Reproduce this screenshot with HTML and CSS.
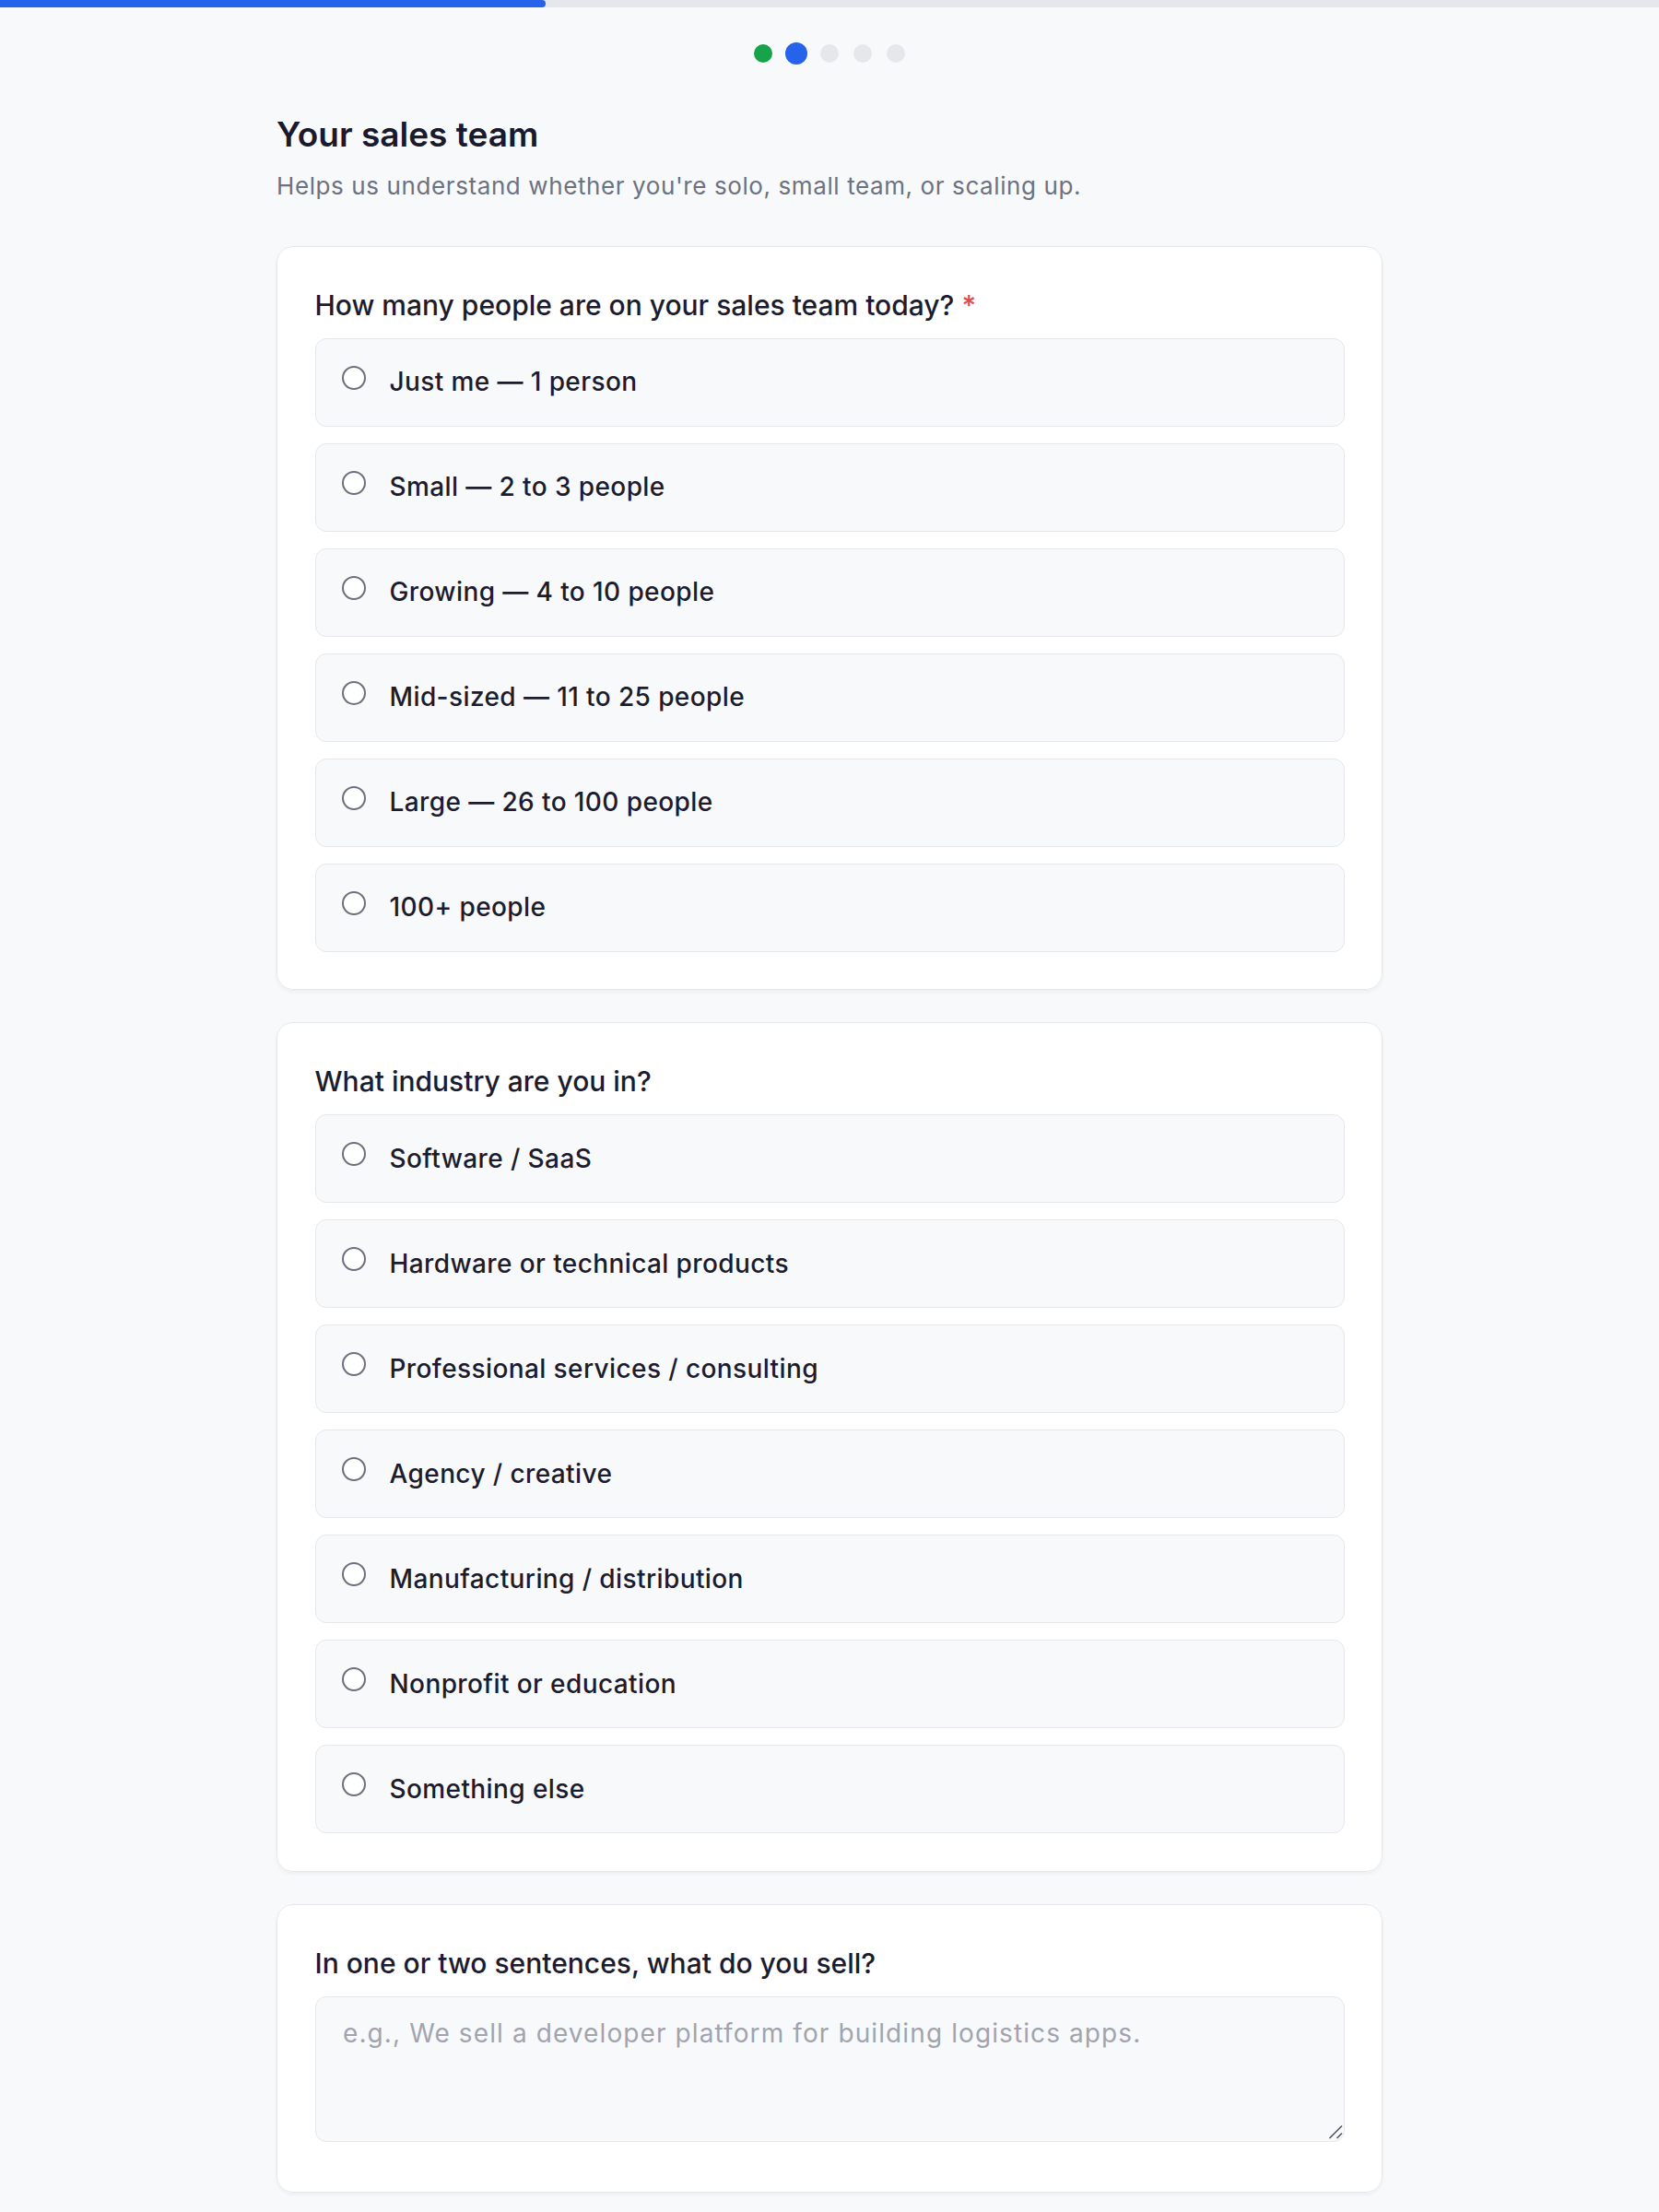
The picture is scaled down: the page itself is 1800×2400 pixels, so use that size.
FILE: index.html
```html
<!DOCTYPE html>
<html lang="en">
<head>
<meta charset="utf-8">
<title>Your sales team</title>
<link rel="stylesheet" href="styles.css">
</head>
<body>
  <div class="progress"><div class="progress-fill" style="width: 32.9%"></div></div>

  <div class="steps">
    <span class="step done"></span>
    <span class="step active"></span>
    <span class="step"></span>
    <span class="step"></span>
    <span class="step"></span>
  </div>

  <main class="wrap">
    <header class="intro">
      <h1 class="title">Your sales team</h1>
      <p class="subtitle">Helps us understand whether you're solo, small team, or scaling up.</p>
    </header>

    <form class="questions">
      <fieldset class="card">
        <legend class="question">How many people are on your sales team today?<span class="req">*</span></legend>
        <div class="options">
          <label class="option"><input type="radio" class="radio" name="team"><span>Just me — 1 person</span></label>
          <label class="option"><input type="radio" class="radio" name="team"><span>Small — 2 to 3 people</span></label>
          <label class="option"><input type="radio" class="radio" name="team"><span>Growing — 4 to 10 people</span></label>
          <label class="option"><input type="radio" class="radio" name="team"><span>Mid-sized — 11 to 25 people</span></label>
          <label class="option"><input type="radio" class="radio" name="team"><span>Large — 26 to 100 people</span></label>
          <label class="option"><input type="radio" class="radio" name="team"><span>100+ people</span></label>
        </div>
      </fieldset>

      <fieldset class="card">
        <legend class="question">What industry are you in?</legend>
        <div class="options">
          <label class="option"><input type="radio" class="radio" name="industry"><span>Software / SaaS</span></label>
          <label class="option"><input type="radio" class="radio" name="industry"><span>Hardware or technical products</span></label>
          <label class="option"><input type="radio" class="radio" name="industry"><span>Professional services / consulting</span></label>
          <label class="option"><input type="radio" class="radio" name="industry"><span>Agency / creative</span></label>
          <label class="option"><input type="radio" class="radio" name="industry"><span>Manufacturing / distribution</span></label>
          <label class="option"><input type="radio" class="radio" name="industry"><span>Nonprofit or education</span></label>
          <label class="option"><input type="radio" class="radio" name="industry"><span>Something else</span></label>
        </div>
      </fieldset>

      <fieldset class="card">
        <legend class="question">In one or two sentences, what do you sell?</legend>
        <div class="answer-box">
          <textarea class="answer" placeholder="e.g., We sell a developer platform for building logistics apps."></textarea>
          <svg class="grip" width="16" height="16" viewBox="0 0 16 16" aria-hidden="true">
            <path d="M1.5 15 L15 1.5 M9.5 15 L15 9.5" stroke="#55555f" stroke-width="1.6" fill="none"/>
          </svg>
        </div>
      </fieldset>
    </form>
  </main>
</body>
</html>
```

FILE: styles.css
```css
* {
  box-sizing: border-box;
}

html, body {
  margin: 0;
  padding: 0;
}

body {
  background: #f8f9fb;
  font-family: Inter, "Noto Sans", "Liberation Sans", sans-serif;
  color: #1c1c2e;
  min-height: 2400px;
}

/* top progress bar */
.progress {
  height: 8px;
  background: #e5e7eb;
}

.progress-fill {
  height: 100%;
  background: #2563eb;
  border-radius: 0 4px 4px 0;
}

/* step dots */
.steps {
  display: flex;
  justify-content: center;
  gap: 16px;
  margin-top: 40px;
  height: 20px;
}

.step {
  width: 20px;
  height: 20px;
  border-radius: 50%;
  background: #e5e7eb;
}

.step.done {
  background: #16a34a;
}

.step.active {
  background: #2563eb;
  transform: scale(1.2);
}

/* page column */
.wrap {
  width: 1200px;
  margin: 0 auto;
  padding-top: 54.6px;
  padding-bottom: 60px;
}

.intro {
  margin-bottom: 47px;
}

.title {
  margin: 0 0 16px;
  font-size: 37px;
  line-height: 45px;
  font-weight: 600;
  color: #1a1a2e;
}

.subtitle {
  margin: 0;
  font-size: 26px;
  line-height: 36px;
  letter-spacing: 0.6px;
  color: #6b7280;
}

/* question cards */
.questions {
  display: flex;
  flex-direction: column;
  gap: 35px;
}

.card {
  margin: 0;
  min-width: 0;
  background: #ffffff;
  border: 1px solid #e5e7eb;
  border-radius: 18px;
  padding: 41px 40.5px 40.5px;
  box-shadow: 0 2px 4px rgba(17, 24, 39, 0.05);
}

.question {
  float: left;
  width: 100%;
  padding: 0;
  margin: 0 0 13px;
  font-size: 30px;
  line-height: 45px;
  font-weight: 500;
  color: #1c1c2e;
}

.question + * {
  clear: both;
}

.req {
  color: #e5484d;
  margin-left: 8px;
}

.options {
  display: flex;
  flex-direction: column;
  gap: 18px;
}

.option {
  display: flex;
  align-items: flex-start;
  gap: 26px;
  padding: 26.75px 28.5px;
  background: #f8f9fb;
  border: 1px solid #e5e7eb;
  border-radius: 12px;
  font-size: 28px;
  line-height: 40.5px;
  letter-spacing: 0.4px;
  font-weight: 500;
  color: #1c1c2e;
  cursor: pointer;
}

.radio {
  appearance: none;
  -webkit-appearance: none;
  flex: none;
  width: 26px;
  height: 26px;
  margin: 2.5px 0 0 -0.5px;
  border: 2px solid #6e6e7e;
  border-radius: 50%;
  background: #ffffff;
}

/* free-text answer */
.answer-box {
  position: relative;
  margin-bottom: 14px;
}

.answer {
  display: block;
  width: 100%;
  height: 158px;
  margin: 0;
  padding: 19px 29.5px;
  background: #f8f9fb;
  border: 1px solid #e5e7eb;
  border-radius: 12px;
  font-family: Inter, "Noto Sans", "Liberation Sans", sans-serif;
  font-size: 28px;
  line-height: 40.5px;
  letter-spacing: 1.1px;
  color: #1c1c2e;
  resize: none;
}

.answer::placeholder {
  color: #a1a4ae;
}

.grip {
  position: absolute;
  right: 2px;
  bottom: 3px;
  pointer-events: none;
}
```
